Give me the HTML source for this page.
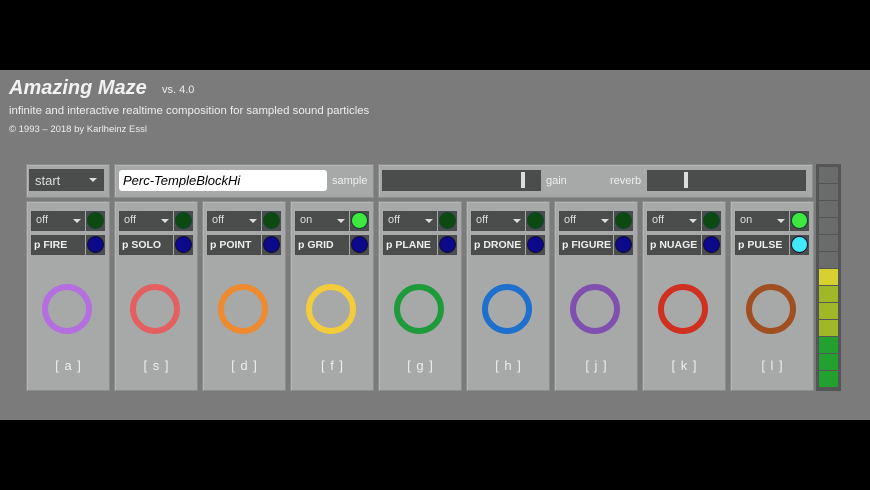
<!DOCTYPE html><html><head><style>
body{margin:0;width:870px;height:490px;background:#000;position:relative;overflow:hidden;font-family:"Liberation Sans",sans-serif}
.bg{position:absolute;left:0;top:70px;width:870px;height:350px;background:#7b7b7b}
.a{position:absolute;white-space:nowrap}
.pn{position:absolute;background:#a7a9a9;border:1px solid #8c8d8d;box-sizing:border-box;box-shadow:inset 1px 1px 0 #b5b7b7}
.dd{position:absolute;background:#4b4c4c;color:#ddd;font-size:11px;box-sizing:border-box;white-space:nowrap;overflow:hidden}
.bt{position:absolute;background:#4b4c4c;width:19px;height:20px}
.bt i{position:absolute;left:2px;top:2px;width:15px;height:15px;border-radius:50%}
.ring{position:absolute;width:38px;height:38px;border-radius:50%;border:6px solid}
.lb{position:absolute;color:#eee;font-size:13px;letter-spacing:1px;width:83px;text-align:center}
.tri{position:absolute;width:0;height:0;border-left:4px solid transparent;border-right:4px solid transparent;border-top:4px solid #ddd}
.m{position:absolute;left:819px;width:19px;height:16px}
</style></head><body>
<div class="bg"></div>
<div class="a" style="left:9px;top:77px;color:#f2f2f2;font-size:20px;font-weight:bold;font-style:italic">Amazing Maze</div>
<div class="a" style="left:162px;top:84px;color:#eee;font-size:11px">vs. 4.0</div>
<div class="a" style="left:9px;top:105px;color:#eee;font-size:11.4px">infinite and interactive realtime composition for sampled sound particles</div>
<div class="a" style="left:9px;top:124px;color:#eee;font-size:9.5px">© 1993 – 2018 by Karlheinz Essl</div>

<div class="pn" style="left:26px;top:164px;width:84px;height:34px"></div>
<div class="dd" style="left:29px;top:169px;width:75px;height:22px;padding:4px 0 0 6px;font-size:13px">start</div>
<div class="tri" style="left:89px;top:178px"></div>
<div class="pn" style="left:114px;top:164px;width:260px;height:34px"></div>
<div class="a" style="left:119px;top:170px;width:208px;height:21px;background:#fff;border-radius:3px;font-size:13px;font-style:italic;padding:3px 0 0 4px;box-sizing:border-box">Perc-TempleBlockHi</div>
<div class="a" style="left:332px;top:175px;color:#eee;font-size:11px">sample</div>
<div class="pn" style="left:378px;top:164px;width:435px;height:34px"></div>
<div class="a" style="left:382px;top:170px;width:159px;height:21px;background:#4b4c4c"></div>
<div class="a" style="left:521px;top:172px;width:4px;height:16px;background:#ddd"></div>
<div class="a" style="left:546px;top:175px;color:#eee;font-size:11px">gain</div>
<div class="a" style="left:610px;top:175px;color:#eee;font-size:11px">reverb</div>
<div class="a" style="left:647px;top:170px;width:159px;height:21px;background:#4b4c4c"></div>
<div class="a" style="left:684px;top:172px;width:4px;height:16px;background:#ddd"></div>

<div class="a" style="left:816px;top:164px;width:25px;height:227px;background:#555"></div>
<div id="meter"></div>
<div id="p"></div>
<script>
var mc=['#6a6b6b','#6a6b6b','#6a6b6b','#6a6b6b','#6a6b6b','#6a6b6b','#d6d030','#a0b828','#a0b828','#a0b828','#22a030','#22a030','#22a030'],h='';
for(var i=0;i<13;i++)h+='<div class="m" style="top:'+(167+i*17)+'px;background:'+mc[i]+'"></div>';
document.getElementById('meter').innerHTML=h;
var d=[['off','FIRE','a','#b46ee0',0],['off','SOLO','s','#e46060',0],['off','POINT','d','#ee8a30',0],['on','GRID','f','#f2cc3a',1],['off','PLANE','g','#1e9a3a',0],['off','DRONE','h','#1e70cc',0],['off','FIGURE','j','#8050b0',0],['off','NUAGE','k','#d03020',0],['on','PULSE','l','#a05020',2]];
h='';
d.forEach(function(e,i){var x=26+88*i;
h+='<div class="pn" style="left:'+x+'px;top:201px;width:84px;height:190px"></div>';
h+='<div class="dd" style="left:'+(x+5)+'px;top:211px;width:54px;height:20px;padding:3px 0 0 5px">'+e[0]+'</div><div class="tri" style="left:'+(x+47)+'px;top:219px"></div>';
h+='<div class="bt" style="left:'+(x+60)+'px;top:211px"><i style="background:'+(e[4]?'#3ee83e':'#0c4a10')+';box-shadow:0 0 0 1px #143"></i></div>';
h+='<div class="dd" style="left:'+(x+5)+'px;top:235px;width:54px;height:20px;padding:4px 0 0 3px;font-weight:bold;color:#eee;font-size:10.5px">p '+e[1]+'</div>';
h+='<div class="bt" style="left:'+(x+60)+'px;top:235px"><i style="background:'+(e[4]==2?'#40eaf8':'#0a0a8a')+';box-shadow:0 0 0 1px #113"></i></div>';
h+='<div class="ring" style="left:'+(x+16)+'px;top:284px;border-color:'+e[3]+'"></div>';
h+='<div class="lb" style="left:'+(x+1)+'px;top:358px">[ '+e[2]+' ]</div>';});
document.getElementById('p').innerHTML=h;
</script>
</body></html>
